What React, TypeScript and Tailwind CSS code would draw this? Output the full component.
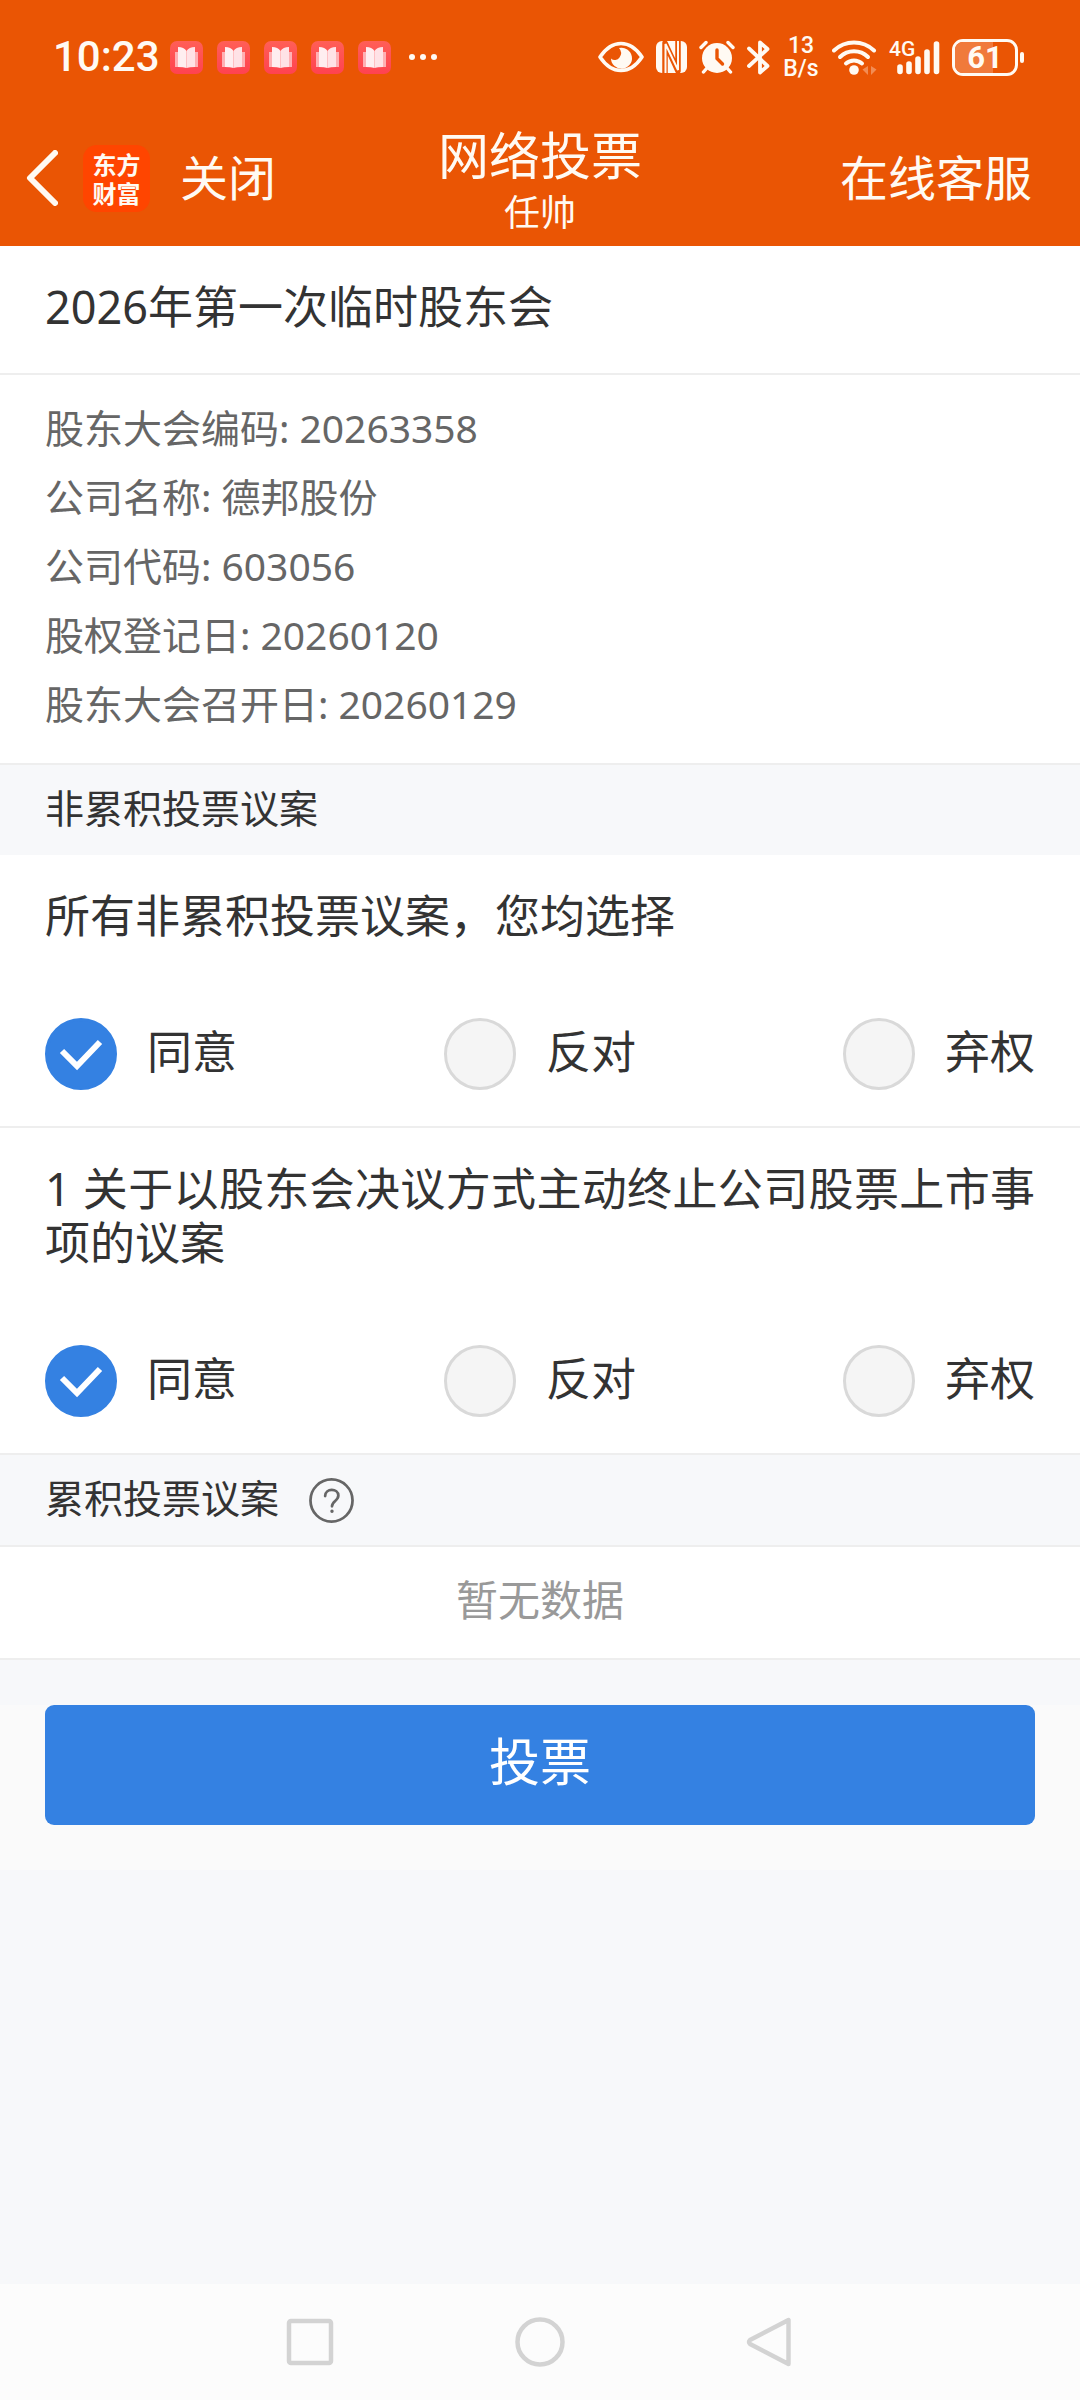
import { useState } from "react";

const APP_FONT = "font-['Noto_Sans','Noto_Sans_CJK_SC',sans-serif]";

function ReaderIcon() {
  return (
    <svg className="size-[33px]" viewBox="0 0 33 33" aria-hidden="true">
      <defs>
        <linearGradient id="reader" x1="0" y1="0" x2="0" y2="1">
          <stop offset="0" stopColor="#ff5f57" />
          <stop offset="1" stopColor="#ff4250" />
        </linearGradient>
      </defs>
      <rect width="33" height="33" rx="7" fill="url(#reader)" />
      <path d="M5 11h4v15H5zM24 11h4v15h-4z" fill="#ffb0b4" />
      <path d="M8 6q6 0 8.500 4v17q-3-1-8.500-1z" fill="#ffeef0" />
      <path d="M25 6q-6 0-8.500 4v17q3-1 8.500-1z" fill="#ffe2e6" />
    </svg>
  );
}

function EyeIcon() {
  return (
    <svg className="h-8 w-[46px]" viewBox="0 0 46 32" aria-hidden="true">
      <path d="M2 16C8 7 15 2.500 23 2.500S38 7 44 16C38 25 31 29.500 23 29.500S8 25 2 16z" fill="none" stroke="#fffaf3" strokeWidth="3.600" strokeLinejoin="round" />
      <path d="M21 7a10.500 10.500 0 1 1-8 10.500 5.500 5.500 0 0 0 8.500-1q3.500-5-.5-9.500z" fill="#fffaf3" />
    </svg>
  );
}

function NfcIcon() {
  return (
    <svg className="h-8 w-[31px]" viewBox="0 0 31 32" aria-hidden="true">
      <rect width="31" height="32" rx="6" fill="#fffaf3" />
      <path d="M9 32V2l13 28V0" fill="none" stroke="#ea5504" strokeWidth="5.500" strokeLinejoin="round" />
      <path d="M9.500 32V3l12.500 26V0" fill="none" stroke="#fffaf3" strokeWidth="2" />
    </svg>
  );
}

function AlarmIcon() {
  return (
    <svg className="h-[34px] w-9" viewBox="0 0 36 34" aria-hidden="true">
      <g stroke="#fffaf3" strokeWidth="3.400" strokeLinecap="round">
        <path d="M2 7.500L7 2.500M34 7.500L29 2.500M8 28l-3.500 4M28 28l3.500 4" />
      </g>
      <circle cx="18" cy="18" r="15" fill="#fffaf3" />
      <path d="M18 10v8.500l5.500 5.500" fill="none" stroke="#ea5504" strokeWidth="3.400" strokeLinecap="round" strokeLinejoin="round" />
    </svg>
  );
}

function BluetoothIcon() {
  return (
    <svg className="h-[35px] w-[23px]" viewBox="0 0 23 35" aria-hidden="true">
      <path d="M2 8.500l18.500 17.500-7.500 6.500v-30l7.500 6.500L2 26" fill="none" stroke="#fffaf3" strokeWidth="3.800" strokeLinejoin="round" strokeLinecap="round" />
    </svg>
  );
}

function WifiIcon() {
  return (
    <svg className="h-9 w-[45px]" viewBox="0 0 45 36" aria-hidden="true">
      <g fill="none" stroke="#fffaf3" strokeWidth="4" strokeLinecap="round">
        <path d="M2 11.500a29 29 0 0 1 40 0" />
        <path d="M8 18a20 20 0 0 1 28 0" />
        <path d="M14 24.500a12 12 0 0 1 16 0" />
      </g>
      <circle cx="22" cy="31" r="4.800" fill="#fffaf3" />
      <path d="M36 27v9l-5.500-5.500zM39 27v9l5.500-5.500z" fill="#f28c54" />
    </svg>
  );
}

function SignalIcon() {
  return (
    <svg className="h-9 w-[43px]" viewBox="0 0 43 36" aria-hidden="true">
      <path d="M3 28v4.500M12 25v7.500M21 20v12.500M30 13v19.500M39.500 5v27.500" stroke="#fffaf3" strokeWidth="5.600" strokeLinecap="round" />
    </svg>
  );
}

function StatusBar() {
  return (
    <div className="flex h-[114px] items-center justify-between pr-[56px] pl-[53px] font-['Roboto',sans-serif] text-[#fffaf3]">
      <div className="flex items-center">
        <time className="text-[42px] leading-none font-medium">10:23</time>
        <div className="ml-[10px] flex gap-[14px]">
          <ReaderIcon />
          <ReaderIcon />
          <ReaderIcon />
          <ReaderIcon />
          <ReaderIcon />
        </div>
        <div className="ml-[18px] flex gap-[5px]">
          <i className="size-[6px] rounded-full bg-current" />
          <i className="size-[6px] rounded-full bg-current" />
          <i className="size-[6px] rounded-full bg-current" />
        </div>
      </div>
      <div className="flex items-center gap-3">
        <EyeIcon />
        <NfcIcon />
        <AlarmIcon />
        <BluetoothIcon />
        <div className="flex w-[38px] flex-col items-center text-[23px] leading-[23px] font-medium">
          <span>13</span>
          <span>B/s</span>
        </div>
        <WifiIcon />
        <div className="relative flex pl-2">
          <SignalIcon />
          <span className="absolute top-0 left-0 text-[21px] leading-none font-medium">4G</span>
        </div>
        <div className="flex items-center gap-[2px]">
          <div className="relative flex h-[37px] w-[66px] items-center justify-center overflow-hidden rounded-[11px] border-[3px] border-current">
            <div className="absolute inset-y-0 left-0 w-[64%] bg-[#f07a3b]" />
            <span className="relative text-[31px] leading-none font-bold">61</span>
          </div>
          <i className="h-[11px] w-1 rounded-full bg-current" />
        </div>
      </div>
    </div>
  );
}

function Header() {
  return (
    <header className="bg-[#ea5504] text-[#fffaf3]">
      <StatusBar />
      <div className="grid h-[132px] grid-cols-[1fr_auto_1fr] items-center">
        <div className="flex items-center pb-1 pl-[26px]">
          <button type="button" aria-label="返回">
            <svg className="h-14 w-8" viewBox="0 0 32 56" aria-hidden="true">
              <path d="M29 3L4 28l25 25" fill="none" stroke="currentColor" strokeWidth="6" strokeLinecap="round" strokeLinejoin="round" />
            </svg>
          </button>
          <a href="#home" className="ml-[25px] flex size-[67px] items-center justify-center rounded-[14px] bg-[#ff4500]">
            <span className="w-12 font-['Noto_Sans_CJK_SC',sans-serif] text-[24px] leading-[29px] font-bold">东方财富</span>
          </a>
          <button type="button" className="ml-[30px] text-[48px] leading-[60px]">关闭</button>
        </div>
        <div className="flex flex-col items-center pt-[6px]">
          <h1 className="text-[51px] leading-[60px]">网络投票</h1>
          <p className="text-[36px] leading-[56px]">任帅</p>
        </div>
        <div className="flex justify-end pr-12 pb-1">
          <button type="button" className="text-[48px] leading-[60px]">在线客服</button>
        </div>
      </div>
    </header>
  );
}

const DETAILS = [
  ["股东大会编码", "20263358"],
  ["公司名称", "德邦股份"],
  ["公司代码", "603056"],
  ["股权登记日", "20260120"],
  ["股东大会召开日", "20260129"],
];

const OPTIONS = ["同意", "反对", "弃权"];

function Ballot({ name, title }: { name: string; title: string }) {
  const [choice, setChoice] = useState("同意");
  return (
    <fieldset className="border-b-2 border-[#eeeeee] bg-white px-[45px] pt-[34px] pb-9">
      <legend className="float-left w-full text-justify text-[45px] leading-[54px]">{title}</legend>
      <div className="clear-both flex justify-between pt-[75px]">
        {OPTIONS.map((option) => (
          <label key={option} className="flex items-center gap-[30px] text-[45px] leading-[66px]">
            <span className="relative flex size-[72px]">
              <input
                type="radio"
                name={name}
                value={option}
                checked={choice === option}
                onChange={() => setChoice(option)}
                className="peer size-[72px] appearance-none rounded-full border-[3px] border-[#d9d9d9] bg-[#f5f5f5] checked:border-[#3481e2] checked:bg-[#3481e2]"
              />
              <svg className="pointer-events-none absolute inset-0 hidden size-[72px] peer-checked:block" viewBox="0 0 72 72" aria-hidden="true">
                <path d="M17 33l15 15 23-24" fill="none" stroke="#ffffff" strokeWidth="6" />
              </svg>
            </span>
            <span className="pb-1">{option}</span>
          </label>
        ))}
      </div>
    </fieldset>
  );
}

function SystemNav() {
  return (
    <nav className="flex h-[116px] items-center justify-center gap-[180px] bg-[#fcfcfc] text-[#d3d3d3]">
      <button type="button" aria-label="最近任务">
        <svg className="size-[50px]" viewBox="0 0 50 50" aria-hidden="true">
          <rect x="4" y="4" width="42" height="42" rx="2" fill="none" stroke="currentColor" strokeWidth="4.500" />
        </svg>
      </button>
      <button type="button" aria-label="主屏幕">
        <svg className="size-[50px]" viewBox="0 0 50 50" aria-hidden="true">
          <circle cx="25" cy="25" r="22.500" fill="none" stroke="currentColor" strokeWidth="4.500" />
        </svg>
      </button>
      <button type="button" aria-label="返回上一页">
        <svg className="size-[50px]" viewBox="0 0 50 50" aria-hidden="true">
          <path d="M43.500 3v44L5 27q-2-2 0-4z" fill="none" stroke="currentColor" strokeWidth="4.500" strokeLinejoin="round" />
        </svg>
      </button>
    </nav>
  );
}

export default function App() {
  return (
    <div className={`flex min-h-screen flex-col bg-[#f7f8fa] text-[#333333] ${APP_FONT}`}>
      <Header />
      <main className="flex-1">
        <h2 className="border-b-2 border-[#eeeeee] bg-white px-[45px] pt-[34px] pb-[39px] text-[45px] leading-[54px]">
          2026年第一次临时股东会
        </h2>
        <dl className="border-b-2 border-[#eeeeee] bg-white px-[45px] pt-[18px] pb-[25px] text-[39px] leading-[69px] text-[#666666]">
          {DETAILS.map(([term, value]) => (
            <div key={term} className="flex gap-[10px]">
              <dt>{term}:</dt>
              <dd>{value}</dd>
            </div>
          ))}
        </dl>
        <h3 className="px-[45px] pb-1 text-[39px] leading-[86px]">非累积投票议案</h3>
        <Ballot name="all" title="所有非累积投票议案，您均选择" />
        <Ballot name="item-1" title="1 关于以股东会决议方式主动终止公司股票上市事项的议案" />
        <div className="flex items-center gap-[30px] border-b-2 border-[#eeeeee] px-[45px]">
          <h3 className="pb-1 text-[39px] leading-[86px]">累积投票议案</h3>
          <button type="button" aria-label="累积投票说明">
            <svg className="size-[45px]" viewBox="0 0 46 46" fill="none" stroke="#666666" strokeWidth="2.800" aria-hidden="true">
              <circle cx="23" cy="23" r="21.500" />
              <path d="M16.500 18.500c0-8.500 13.500-8 13.500-.5 0 5.500-6.500 5.500-6.500 11" strokeLinecap="round" />
              <circle cx="23.500" cy="34" r="1" fill="#666666" strokeWidth="1.500" />
            </svg>
          </button>
        </div>
        <p className="border-b-2 border-[#eeeeee] bg-white pb-[6px] text-center text-[42px] leading-[105px] text-[#999999]">暂无数据</p>
        <div className="mt-[45px] bg-[#fafafa] px-[45px] pb-[45px]">
          <button type="button" className="h-[120px] w-full rounded-[9px] bg-[#3481e2] pb-2 text-[51px] leading-none text-white">
            投票
          </button>
        </div>
      </main>
      <SystemNav />
    </div>
  );
}
